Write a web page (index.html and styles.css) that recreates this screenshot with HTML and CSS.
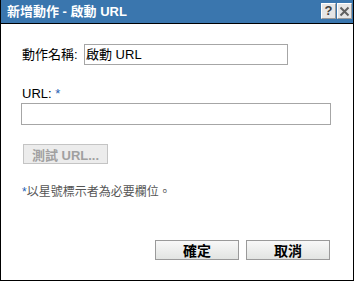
FILE: index.html
```html
<!DOCTYPE html>
<html lang="zh-Hant">
<head>
<meta charset="utf-8">
<link rel="stylesheet" href="styles.css">
</head>
<body>
<div class="dialog">
  <div class="titlebar">
    <span class="title">新增動作 - 啟動 URL</span>
    <div class="tools">
      <span class="tool">?</span>
      <span class="tool tool-x"><svg width="11" height="11" viewBox="0 0 11 11"><path d="M1.5 1.5 L9.5 9.5 M9.5 1.5 L1.5 9.5" stroke="#606060" stroke-width="2"/></svg></span>
    </div>
  </div>
  <div class="content">
    <div class="row">
      <span class="label">動作名稱:</span>
      <div class="input input-name">啟動 URL</div>
    </div>
    <div class="label url-label">URL: <span class="req">*</span></div>
    <div class="input input-url"></div>
    <div class="btn btn-test">測試 URL...</div>
    <div class="note"><span class="req">*</span>以星號標示者為必要欄位。</div>
    <div class="actions">
      <div class="btn btn-main">確定</div>
      <div class="btn btn-main">取消</div>
    </div>
  </div>
</div>
</body>
</html>
```
FILE: styles.css
```css
html, body {
  margin: 0;
  padding: 0;
  background: #fff;
}
body {
  width: 355px;
  height: 282px;
  font-family: "Liberation Sans", "Noto Sans CJK TC", sans-serif;
  font-size: 13px;
  color: #000;
}
.dialog {
  width: 354px;
  height: 281px;
  box-sizing: border-box;
  border: 1px solid #000;
  border-top: none;
  display: flex;
  flex-direction: column;
}
.titlebar {
  height: 24px;
  box-sizing: border-box;
  background: #3a76ae;
  border-bottom: 1px solid #000;
  display: flex;
  align-items: center;
  padding-left: 6px;
}
.title {
  color: #fff;
  font-weight: bold;
  font-size: 13px;
  line-height: 16px;
}
.tools {
  margin-left: auto;
  margin-right: 1px;
  display: flex;
  gap: 1px;
  align-self: flex-start;
  margin-top: 3px;
}
.tool {
  width: 15px;
  height: 16px;
  box-sizing: border-box;
  background: #e6e6e6;
  border: 1px solid #fff;
  border-right-color: #9a9a9a;
  border-bottom-color: #9a9a9a;
  display: flex;
  align-items: center;
  justify-content: center;
  font-weight: bold;
  font-size: 13px;
  color: #404040;
  line-height: 14px;
}
.content {
  flex: 1;
  display: flex;
  flex-direction: column;
  align-items: flex-start;
  padding: 20px 23px 20px 20px;
}
.row {
  display: flex;
  align-items: center;
}
.label {
  line-height: 16px;
  padding-left: 1px;
}
.row .label {
  width: 62px;
}
.req {
  color: #1d5fb4;
}
.input {
  box-sizing: border-box;
  border: 1px solid #a6a6a6;
  background: #fff;
  line-height: 19px;
  padding-left: 1px;
}
.input-name {
  width: 204px;
  height: 21px;
}
.url-label {
  margin-top: 21px;
}
.input-url {
  width: 310px;
  height: 22px;
  margin-top: 1px;
}
.btn {
  box-sizing: border-box;
  height: 20px;
  display: flex;
  align-items: center;
  justify-content: center;
  font-weight: bold;
  border: 1px solid #9a9a9a;
  background: linear-gradient(#f8f8f8, #e2e4e2);
}
.btn-test {
  margin-top: 19px;
  margin-left: 2px;
  width: 85px;
  color: #a0a0a0;
  border-color: #c4c4c4;
  background: #ececec;
}
.note {
  margin-top: 20px;
  margin-left: 1px;
  font-size: 12px;
  line-height: 16px;
  color: #555;
}
.actions {
  margin-top: auto;
  align-self: flex-end;
  display: flex;
  gap: 7px;
}
.btn-main {
  width: 84px;
  font-size: 14px;
}
```
